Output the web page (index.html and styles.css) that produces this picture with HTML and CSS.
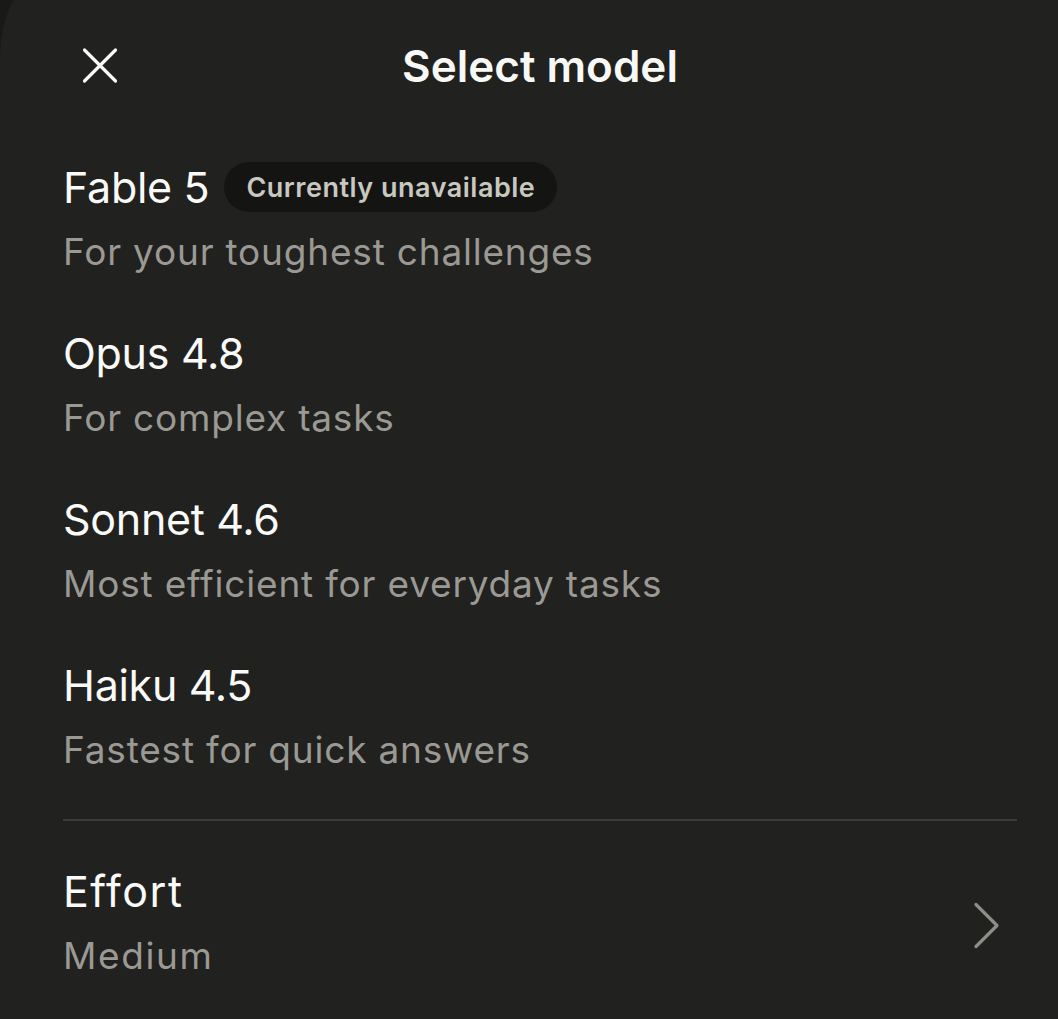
FILE: index.html
```html
<!DOCTYPE html>
<html lang="en">
<head>
<meta charset="utf-8">
<title>Select model</title>
<link rel="stylesheet" href="styles.css">
</head>
<body>
<div class="sheet">
  <header class="header">
    <div class="header-left">
      <button class="close" aria-label="Close">
        <svg width="48" height="48" viewBox="0 0 48 48" fill="none" stroke="#f8f8f6" stroke-width="3.2" stroke-linecap="round">
          <path d="M8.5 9 L39.5 40 M39.5 9 L8.5 40"/>
        </svg>
      </button>
    </div>
    <h1 class="title">Select model</h1>
    <div class="header-right"></div>
  </header>

  <ul class="models">
    <li class="model">
      <div class="name-row">
        <span class="name">Fable 5</span>
        <span class="badge">Currently unavailable</span>
      </div>
      <div class="desc">For your toughest challenges</div>
    </li>
    <li class="model">
      <div class="name-row"><span class="name">Opus 4.8</span></div>
      <div class="desc">For complex tasks</div>
    </li>
    <li class="model">
      <div class="name-row"><span class="name">Sonnet 4.6</span></div>
      <div class="desc">Most efficient for everyday tasks</div>
    </li>
    <li class="model">
      <div class="name-row"><span class="name">Haiku 4.5</span></div>
      <div class="desc">Fastest for quick answers</div>
    </li>
  </ul>

  <hr class="divider">

  <div class="effort">
    <div class="effort-text">
      <div class="name-row"><span class="name effort-name">Effort</span></div>
      <div class="desc medium">Medium</div>
    </div>
    <svg class="chevron" width="30" height="48" viewBox="0 0 30 48" fill="none" stroke="#8f8d88" stroke-width="3.2" stroke-linecap="round" stroke-linejoin="round">
      <path d="M4 3.5 L25 24.5 L4 45.5"/>
    </svg>
  </div>
</div>
</body>
</html>
```
FILE: styles.css
```css
html, body {
  margin: 0;
  padding: 0;
  background: #191918;
  overflow: hidden;
}

body {
  font-family: Inter, "Noto Sans", "Liberation Sans", sans-serif;
  color: #fafaf8;
  width: 1058px;
  height: 1019px;
}

.sheet {
  width: 1080px;
  min-height: 1120px;
  margin-top: -65px;
  padding: 65px 63px 0 63px;
  box-sizing: border-box;
  background: #21211f;
  border-top-left-radius: 120px;
}

.header {
  display: grid;
  grid-template-columns: 1fr auto 1fr;
  align-items: center;
  padding-top: 36px;
  height: 60px;
  margin-bottom: 61px;
}

.header-left {
  display: flex;
  align-items: center;
}

.close {
  background: none;
  border: none;
  padding: 0;
  margin: 0 0 0 13px;
  width: 48px;
  height: 48px;
  display: flex;
  align-items: center;
  justify-content: center;
  margin-top: -3px;
}

.title {
  margin: 0;
  font-size: 44px;
  line-height: 60px;
  font-weight: 600;
  letter-spacing: 0;
  color: #f8f8f6;
}

.models {
  list-style: none;
  margin: 0;
  padding: 0;
  display: flex;
  flex-direction: column;
  gap: 38px;
}

.name-row {
  display: flex;
  align-items: center;
  gap: 15px;
  height: 60px;
}

.name {
  font-size: 43px;
  line-height: 60px;
  font-weight: 400;
  color: #fafaf8;
  letter-spacing: -0.3px;
}

.effort-name {
  letter-spacing: 1.5px;
}

.desc {
  font-size: 37px;
  line-height: 66px;
  padding-top: 2px;
  color: #9b9993;
  letter-spacing: 0.8px;
}

.medium {
  letter-spacing: 1.6px;
}

.badge {
  display: inline-flex;
  align-items: center;
  height: 50px;
  padding: 0 22px;
  border-radius: 25px;
  background: #141413;
  color: #c9c8c0;
  font-size: 27px;
  font-weight: 600;
  letter-spacing: 0.5px;
}

.divider {
  border: none;
  height: 2px;
  background: #3b3b39;
  margin: 36px 0 40px 0;
}

.effort {
  display: flex;
  align-items: center;
  justify-content: space-between;
  padding-right: 15px;
}

.chevron {
  display: block;
}
```
